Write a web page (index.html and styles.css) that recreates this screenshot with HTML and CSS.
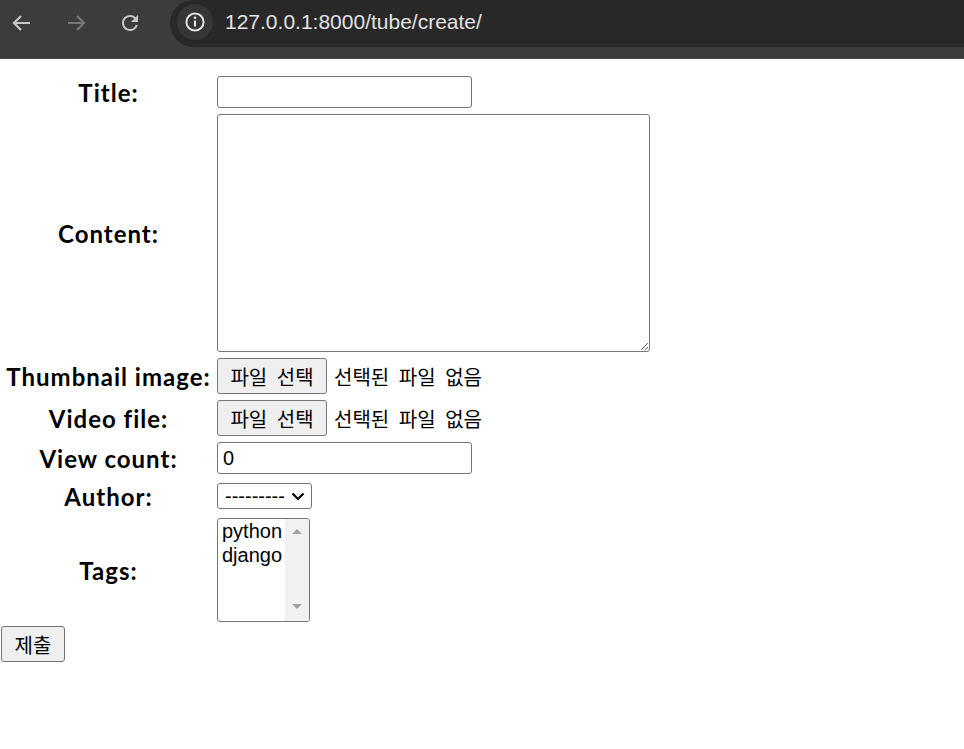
FILE: index.html
```html
<!DOCTYPE html>
<html lang="ko">
<head>
<meta charset="utf-8">
<title>create</title>
<link rel="stylesheet" href="styles.css">
</head>
<body>
<div class="toolbar">
  <div class="nav">
    <span class="navbtn">
      <svg width="24" height="24" viewBox="0 0 24 24"><path d="M20 12H5M11 5l-7 7 7 7" fill="none" stroke="currentColor" stroke-width="2.2"/></svg>
    </span>
    <span class="navbtn dim">
      <svg width="24" height="24" viewBox="0 0 24 24"><path d="M4 12h15M13 5l7 7-7 7" fill="none" stroke="currentColor" stroke-width="2.2"/></svg>
    </span>
    <span class="navbtn">
      <svg width="24" height="24" viewBox="0 0 24 24"><path d="M17.65 6.35A7.958 7.958 0 0 0 12 4c-4.42 0-7.99 3.58-7.99 8s3.57 8 7.99 8c3.730 0 6.84-2.55 7.73-6h-2.08A5.99 5.99 0 0 1 12 18c-3.31 0-6-2.69-6-6s2.69-6 6-6c1.66 0 3.14.69 4.22 1.78L13 11h7V4l-2.35 2.35z" fill="currentColor"/></svg>
    </span>
  </div>
  <div class="omnibox">
    <span class="info">
      <svg width="22" height="22" viewBox="0 0 22 22"><circle cx="11" cy="11" r="8.6" fill="none" stroke="#e3e3e3" stroke-width="2"/><path d="M11 9.6v6" stroke="#e3e3e3" stroke-width="2"/><circle cx="11" cy="6.8" r="1.3" fill="#e3e3e3"/></svg>
    </span>
    <span class="url">127.0.0.1:8000/tube/create/</span>
  </div>
</div>

<form class="form">
  <div class="fields">
    <label class="lbl" for="id_title">Title:</label>
    <input class="text" type="text" id="id_title">

    <label class="lbl" for="id_content">Content:</label>
    <textarea class="area" id="id_content"></textarea>

    <label class="lbl">Thumbnail image:</label>
    <div class="file"><button type="button" class="btn">파일 선택</button><span class="nofile">선택된 파일 없음</span></div>

    <label class="lbl">Video file:</label>
    <div class="file"><button type="button" class="btn">파일 선택</button><span class="nofile">선택된 파일 없음</span></div>

    <label class="lbl" for="id_view">View count:</label>
    <input class="text" type="text" id="id_view" value="0">

    <label class="lbl">Author:</label>
    <div class="select"><span>---------</span><svg width="14" height="9" viewBox="0 0 14 9"><path d="M1.5 1.5L7 7l5.5-5.5" fill="none" stroke="#000" stroke-width="2.2"/></svg></div>

    <label class="lbl">Tags:</label>
    <div class="listbox">
      <div class="options"><div class="opt">python</div><div class="opt">django</div></div>
      <div class="scroll"><span class="up"></span><span class="down"></span></div>
    </div>
  </div>
  <button type="submit" class="submit">제출</button>
</form>
</body>
</html>
```
FILE: styles.css
```css
body {
  margin: 0;
  background: #fff;
  font-family: "Noto Sans CJK KR", sans-serif;
  color: #000;
}

.toolbar {
  display: flex;
  align-items: flex-start;
  height: 58px;
  background: #3c3c3c;
  border-bottom: 1px solid #474747;
}

.nav {
  flex: 0 0 170px;
  box-sizing: border-box;
  display: flex;
  align-items: center;
  gap: 18px;
  padding-left: 4px;
  height: 45px;
}

.navbtn {
  width: 36px;
  height: 36px;
  display: flex;
  align-items: center;
  justify-content: center;
  color: #c7c7c7;
}

.navbtn.dim {
  color: #777;
}

.omnibox {
  flex: 1;
  height: 47px;
  background: #282828;
  border-radius: 24px 0 0 24px;
  display: flex;
  align-items: flex-start;
  padding: 4px 0 0 7px;
  box-sizing: border-box;
}

.info {
  width: 36px;
  height: 36px;
  border-radius: 50%;
  background: #363636;
  display: flex;
  align-items: center;
  justify-content: center;
}

.url {
  margin-left: 12px;
  font-family: "Liberation Sans", Arial, sans-serif;
  font-size: 21px;
  line-height: 36px;
  color: #e3e3e3;
}

.form {
  margin: 0;
  padding-top: 17px;
}

.fields {
  display: grid;
  grid-template-columns: 217px auto;
  grid-auto-rows: minmax(32px, auto);
  row-gap: 6px;
  align-items: center;
  justify-items: start;
}

.lbl {
  justify-self: stretch;
  text-align: center;
  font-family: Lato, "Noto Sans", sans-serif;
  font-weight: 700;
  font-size: 24px;
  letter-spacing: 1px;
  line-height: 30px;
  padding-top: 2px;
}

.text {
  box-sizing: border-box;
  width: 255px;
  height: 32px;
  margin: 0;
  padding: 0 5px;
  border: 1px solid #767676;
  border-radius: 3px;
  font-family: "Liberation Sans", Arial, sans-serif;
  font-size: 20px;
  color: #000;
  background: #fff;
}

.area {
  display: block;
  box-sizing: border-box;
  width: 433px;
  height: 238px;
  margin: 0;
  border: 1px solid #767676;
  border-radius: 3px;
  background: #fff;
}

.file {
  display: flex;
  align-items: center;
  gap: 7px;
}

.btn,
.submit {
  box-sizing: border-box;
  height: 36px;
  padding: 0;
  border: 1px solid #767676;
  border-radius: 3px;
  background: #efefef;
  font-family: "Noto Sans CJK KR", sans-serif;
  font-size: 20px;
  color: #000;
}

.btn {
  width: 110px;
  word-spacing: 4px;
}

.nofile {
  font-size: 20px;
  word-spacing: 4px;
}

.select {
  box-sizing: border-box;
  width: 95px;
  height: 26px;
  border: 1px solid #767676;
  border-radius: 3px;
  display: flex;
  align-items: center;
  justify-content: space-between;
  padding: 0 6px 0 7px;
  font-family: "Liberation Sans", Arial, sans-serif;
  font-size: 20px;
  line-height: 24px;
}

.listbox {
  box-sizing: border-box;
  width: 93px;
  height: 104px;
  border: 1px solid #767676;
  border-radius: 3px;
  display: flex;
  overflow: hidden;
}

.options {
  flex: 1;
  padding-left: 4px;
  font-family: "Liberation Sans", Arial, sans-serif;
  font-size: 20px;
  line-height: 24px;
}

.scroll {
  width: 24px;
  background: #f1f1f1;
  display: flex;
  flex-direction: column;
  align-items: center;
  justify-content: space-between;
  padding: 10px 0 12px;
  box-sizing: border-box;
}

.up,
.down {
  width: 0;
  height: 0;
  border-left: 5px solid transparent;
  border-right: 5px solid transparent;
}

.up {
  border-bottom: 5px solid #a3a3a3;
}

.down {
  border-top: 5px solid #a3a3a3;
}

.submit {
  display: block;
  width: 64px;
  margin: 4px 0 0 1px;
}
```
